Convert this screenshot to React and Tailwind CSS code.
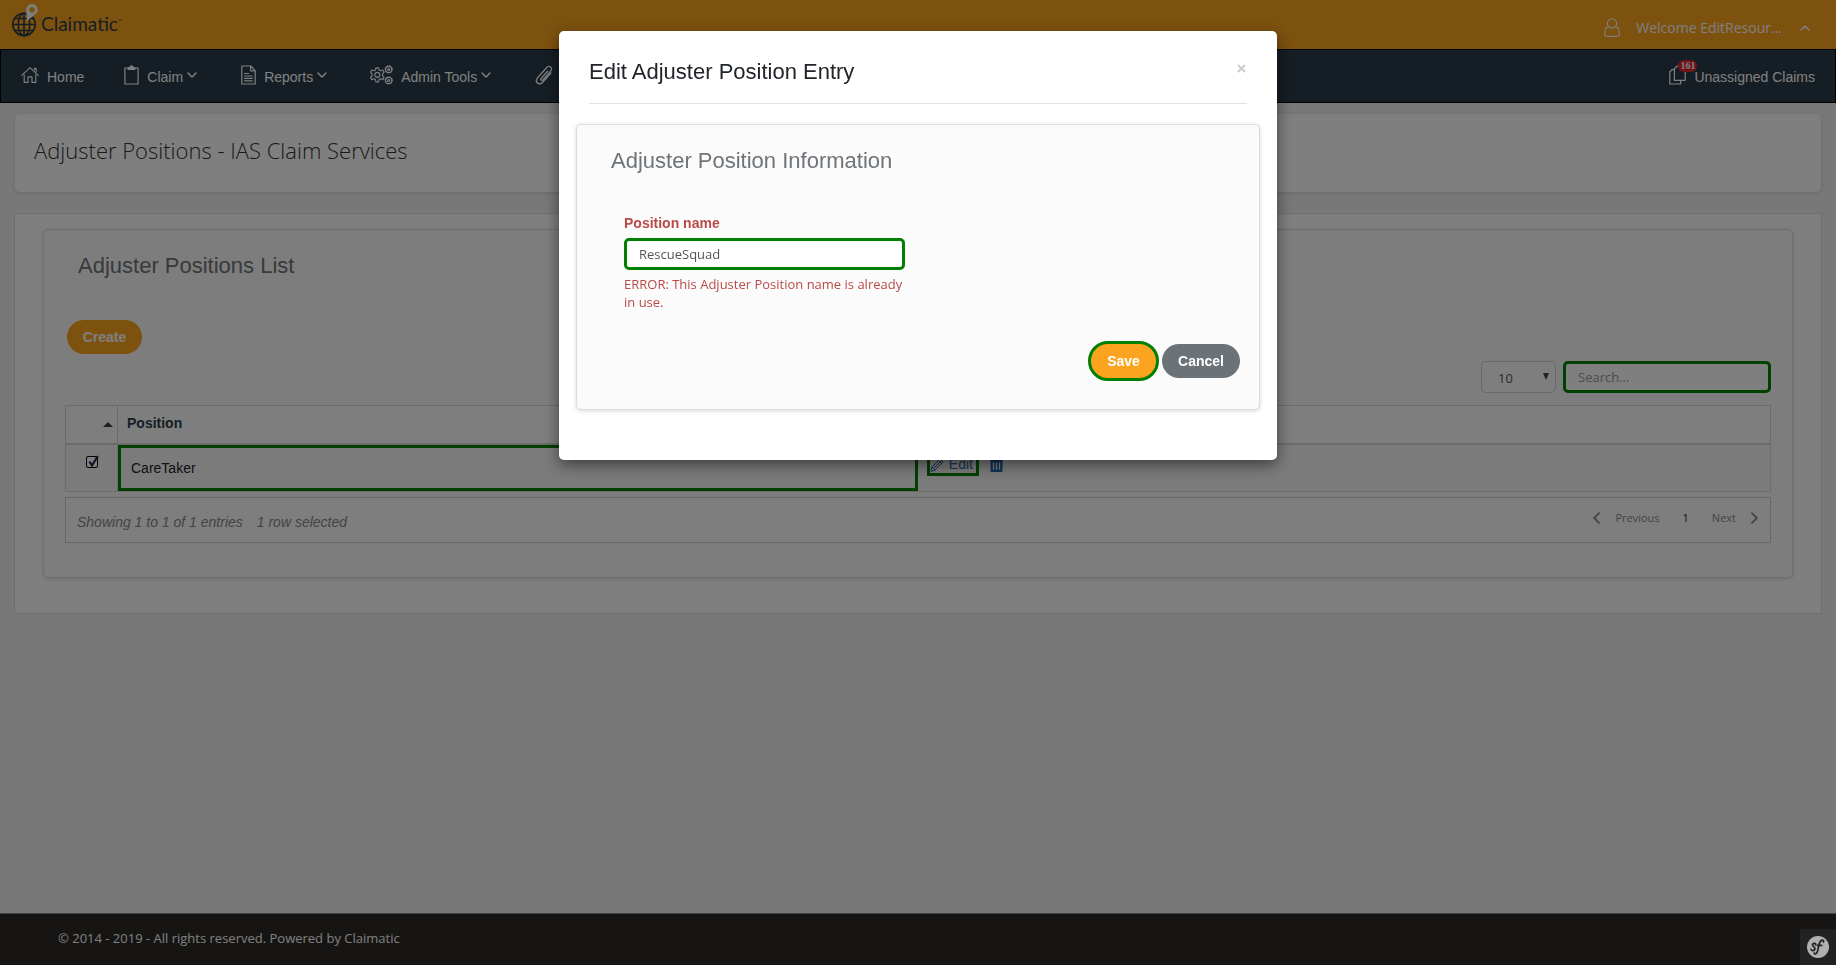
import React from "react";

const stroke = {
  fill: "none",
  stroke: "currentColor",
  strokeLinecap: "round",
  strokeLinejoin: "round",
};

function HomeIcon() {
  return (
    <svg className="h-[18px] w-[18px]" viewBox="0 0 19 18" {...stroke} strokeWidth="1.2" aria-hidden="true">
      <path d="M.8 9.4 9.5 1.2l8.7 8.2M14.2 3.4V2H16v3.4M3.4 8.8v8h4V11h4.200v5.800h4v-8" />
    </svg>
  );
}

function ClipboardIcon() {
  return (
    <svg className="h-[20px] w-[15px]" viewBox="0 0 15 20" {...stroke} strokeWidth="1.2" aria-hidden="true">
      <path d="M4 3H.9v16h13.2V3H11" />
      <path d="M4.200 4.400V2.600h1.600L6.600 1h1.800l.8 1.600h1.600v1.800z" fill="currentColor" />
    </svg>
  );
}

function ReportIcon() {
  return (
    <svg className="h-[20px] w-[15px]" viewBox="0 0 15 20" {...stroke} strokeWidth="1.2" aria-hidden="true">
      <path d="M.8 1h9l4.400 4.600V19H.8zM9.600 1v4.800h4.600M3.600 8.500h4M3.600 11h7.600M3.600 13.400h7.600M3.600 15.800h7.600" />
    </svg>
  );
}

function GearsIcon() {
  return (
    <svg className="h-[20px] w-[24px]" viewBox="0 0 24 20" {...stroke} strokeWidth="1.2" aria-hidden="true">
      <path d="M7 2.800h2.600l.5 2.200 1.500.8 2.200-.8 1.300 2.200-1.600 1.700v1.800l1.600 1.700-1.300 2.200-2.200-.8-1.500.8-.5 2.200H7l-.6-2.200-1.400-.8-2.200.8-1.300-2.200 1.600-1.700V8.900L1.500 7.200 2.800 5l2.200.8L6.400 5z" />
      <circle cx="8.300" cy="9.800" r="2.500" />
      <circle cx="19.700" cy="4.400" r="3.100" />
      <circle cx="19.700" cy="4.400" r="3.700" strokeWidth="1" strokeLinecap="butt" strokeDasharray="1.500 1.400" />
      <circle cx="19.700" cy="4.400" r=".9" />
      <circle cx="19.700" cy="15.400" r="3.100" />
      <circle cx="19.700" cy="15.400" r="3.700" strokeWidth="1" strokeLinecap="butt" strokeDasharray="1.500 1.400" />
      <circle cx="19.700" cy="15.400" r=".9" />
    </svg>
  );
}

function ClipIcon() {
  return (
    <svg className="h-[20px] w-[18px]" viewBox="0 0 18 20" {...stroke} strokeWidth="1.300" aria-hidden="true">
      <path d="M12.600 6.200 6.200 13.400c-.9 1.200.6 2.600 1.700 1.500l7.600-8.600c2.800-3.300-1.200-6.800-4-3.600L2.700 12.600c-3.600 4.200 1.400 8.600 5 4.600l8.200-9.200" />
    </svg>
  );
}

function CopyIcon() {
  return (
    <svg className="h-[20px] w-[17px]" viewBox="0 0 17 20" {...stroke} strokeWidth="1.200" aria-hidden="true">
      <path d="M8.200 1h8v14.400H5.400V3.800zM5.400 4.600H3L.8 7v12h10.800v-3.400" />
    </svg>
  );
}

function UserIcon() {
  return (
    <svg className="h-[19px] w-[16px]" viewBox="0 0 16 19" {...stroke} strokeWidth="1.100" aria-hidden="true">
      <circle cx="8" cy="5.400" r="4.700" />
      <path d="M4.200 8.800C1.800 9.500.7 11.500.7 14v2.500c0 1.300.7 1.900 1.900 1.900h10.800c1.200 0 1.900-.6 1.900-1.900V14c0-2.500-1.100-4.500-3.500-5.200" />
    </svg>
  );
}

function Chevron({ d, className }) {
  return (
    <svg className={className} viewBox="0 0 10 10" {...stroke} strokeWidth="1.500" aria-hidden="true">
      <path d={d} />
    </svg>
  );
}

const DOWN = "M1 3l4 4 4-4";
const UP = "M1 7l4-4 4 4";
const LEFT = "M7.500 1 3.500 5l4 4";
const RIGHT = "M2.500 1l4 4-4 4";

function Logo() {
  return (
    <a href="#home" className="flex items-end gap-[3px]">
      <svg className="h-[33px] w-[26px]" viewBox="0 0 26 33" aria-hidden="true">
        <g fill="none" stroke="#2c3c4a" strokeWidth="1.600">
          <circle cx="12" cy="20.500" r="11.200" />
          <ellipse cx="12" cy="20.500" rx="5.800" ry="11.200" />
          <path d="M12 9.500v22M1 20.500h22M2.800 14.500h18.400M2.800 26.500h18.400" />
        </g>
        <path
          d="M20 0a5.800 5.800 0 0 1 5.800 5.800c0 4-5.600 6.200-11.300 12.200.8-4-.3-8-.3-12.200A5.800 5.800 0 0 1 20 0zm0 2.900a2.800 2.800 0 1 0 0 5.600 2.800 2.800 0 0 0 0-5.600z"
          fill="#fff"
          fillRule="evenodd"
        />
      </svg>
      <span className="flex pb-[2px] font-[Lato,sans-serif] text-[19px] leading-[22px] text-[#2c3c4a]">
        Claimatic<span className="text-[5px] leading-[16px]">™</span>
      </span>
    </a>
  );
}

function NavItem({ icon, label, menu, className = "" }) {
  return (
    <a href="#menu" className={`flex items-center gap-[8px] ${className}`}>
      {icon}
      <span className="flex items-center gap-1 pt-[4px]">
        {label}
        {menu && <Chevron d={DOWN} className="mb-1 h-[10px] w-[10px]" />}
      </span>
    </a>
  );
}

function Panel({ className = "", children }) {
  return (
    <div className={`rounded-[5px] border border-[#dcdcdc] bg-[#fbfbfb] shadow-[0_1px_4px_rgba(0,0,0,0.15)] ${className}`}>
      {children}
    </div>
  );
}

function Page() {
  return (
    <div className="flex min-h-screen flex-col bg-[#f0f0f0]">
      <header className="flex h-[49px] items-start justify-between bg-[#faa41f] pl-3 pr-[26px] pt-1">
        <Logo />
        <button type="button" className="mt-[13px] flex items-center gap-4 text-[14px] leading-[20px] text-white">
          <UserIcon />
          <span className="pt-px">Welcome EditResour...</span>
          <Chevron d={UP} className="ml-[2px] h-[10px] w-[10px]" />
        </button>
      </header>

      <nav className="flex h-[54px] items-center justify-between border border-black bg-[#2c3c4a] px-5 font-[Liberation_Sans,sans-serif] text-[14px] text-white">
        <div className="flex items-center gap-11 pb-[2px]">
          <NavItem icon={<HomeIcon />} label="Home" className="-mr-1" />
          <NavItem icon={<ClipboardIcon />} label="Claim" menu />
          <NavItem icon={<ReportIcon />} label="Reports" menu />
          <NavItem icon={<GearsIcon />} label="Admin Tools" menu className="-ml-[2px]" />
          <a href="#attachments" aria-label="Attachments">
            <ClipIcon />
          </a>
        </div>
        <a href="#unassigned" className="relative flex items-center gap-[8px] pb-[2px]">
          <CopyIcon />
          <span className="pt-[4px]">Unassigned Claims</span>
          <span className="absolute -top-[3px] left-[9px] rounded-full bg-[#e02430] px-[2px] font-[Liberation_Serif,serif] text-[10px] font-bold leading-[12px]">
            161
          </span>
        </a>
      </nav>

      <main className="px-[14px] pt-[11px]">
        <div className="mx-px flex h-[78px] items-center rounded-[5px] bg-white px-[19px] shadow-[0_1px_4px_rgba(0,0,0,0.12)]">
          <h1 className="pb-[6px] text-[22px] font-light leading-[30px] text-[#333]">Adjuster Positions - IAS Claim Services</h1>
        </div>

        <section className="mt-[21px] border border-[#dedede] bg-white px-[28px] pb-[35px] pt-[15px]">
          <Panel className="px-[21px] pb-[34px] pt-[22px]">
            <h2 className="ml-[13px] font-[Liberation_Sans,sans-serif] text-[22px] leading-[28px] text-[#6f7478]">
              Adjuster Positions List
            </h2>
            <button
              type="button"
              className="ml-[2px] mt-[40px] block h-[34px] w-[75px] rounded-full bg-[#faa41f] font-[Liberation_Sans,sans-serif] text-[14px] font-bold text-white"
            >
              Create
            </button>

            <div className="mt-[7px] flex justify-end gap-[7px]">
              <div className="relative">
                <select
                  aria-label="Entries per page"
                  className="h-[32px] w-[75px] appearance-none rounded-[5px] border border-[#d0d0d0] bg-[#fdfdfd] px-4 pt-[3px] text-[13px] text-[#555]"
                  defaultValue="10"
                >
                  <option>10</option>
                  <option>25</option>
                </select>
                <svg className="pointer-events-none absolute right-[7px] top-[12px] h-[7px] w-[6px]" viewBox="0 0 6 7" aria-hidden="true">
                  <path d="M0 0h6L3 7z" fill="#444" />
                </svg>
              </div>
              <input
                type="search"
                aria-label="Search"
                placeholder="Search..."
                className="h-[32px] w-[208px] rounded-[5px] border-[3px] border-[#008000] bg-white px-3 text-[13px] placeholder:text-[#999]"
              />
            </div>

            <table className="mt-3 w-full table-fixed border-collapse font-[Liberation_Sans,sans-serif] text-[14px]">
              <colgroup>
                <col className="w-[52px]" />
                <col className="w-[47%]" />
                <col />
              </colgroup>
              <thead>
                <tr className="h-[38px] border border-b-2 border-[#d8d8d8] bg-[#fdfdfd] text-left text-[#2c3c4a]">
                  <th className="border-r border-[#d8d8d8] pr-[4px]">
                    <svg className="ml-auto h-[5px] w-[10px]" viewBox="0 0 10 5" aria-label="Sorted ascending">
                      <path d="M5 0l5 5H0z" fill="#444" />
                    </svg>
                  </th>
                  <th className="pb-[2px] pl-[9px]">Position</th>
                  <th aria-label="Actions" />
                </tr>
              </thead>
              <tbody>
                <tr className="border border-[#dadada] bg-[#f7f7f7] text-[#222]">
                  <td className="border-r border-[#dadada] p-0 align-top">
                    <label className="relative mx-auto mt-[11px] block h-[13px] w-[12px]">
                      <input
                        type="checkbox"
                        defaultChecked
                        aria-label="Select CareTaker"
                        className="block h-[12px] w-[12px] appearance-none rounded-[2px] border border-black bg-white"
                      />
                      <svg className="absolute -right-px -top-px h-[13px] w-[12px]" viewBox="0 0 12 13" aria-hidden="true">
                        <path d="M2.500 6.500l2.500 4L10.800 1" fill="none" stroke="#1c2a48" strokeWidth="2.200" />
                      </svg>
                    </label>
                  </td>
                  <td className="p-0">
                    <div className="mr-px flex h-[46px] items-center border-[3px] border-[#008000] px-[10px] pt-px">CareTaker</div>
                  </td>
                  <td className="p-0 align-top">
                    <div className="flex items-end gap-[11px] pl-[8px] pt-[9px] text-[#2a6cb0]">
                      <a href="#edit" className="flex h-[22px] w-[52px] items-center gap-[5px] border-[3px] border-[#008000]">
                        <svg className="h-[14px] w-[14px]" viewBox="0 0 14 14" {...stroke} strokeWidth="1" aria-hidden="true">
                          <path d="M1 13l1-4L10 1l3 3-8 8zM2 9l3 3M8.500 2.500l3 3M3.500 10.500l7-7" />
                        </svg>
                        Edit
                      </a>
                      <button type="button" aria-label="Delete" className="mb-1">
                        <svg className="h-[14px] w-[13px]" viewBox="0 0 13 14" aria-hidden="true">
                          <path d="M0 1.500h13V3H0zM4 0h5v2H4zM.500 2.500h12V13a1 1 0 0 1-1 1h-10a1 1 0 0 1-1-1z" fill="#1f68b0" />
                          <path d="M3.500 4.500v7M6.500 4.500v7M9.500 4.500v7" stroke="#fff" strokeWidth="1.300" />
                        </svg>
                      </button>
                    </div>
                  </td>
                </tr>
              </tbody>
            </table>

            <div className="mt-[5px] flex h-[46px] items-center justify-between border border-[#d0d0d0] bg-[#fcfcfc] pl-[11px] pr-[12px]">
              <p className="flex gap-[14px] pt-[5px] font-[Liberation_Sans,sans-serif] text-[14px] italic text-[#888]">
                <span>Showing 1 to 1 of 1 entries</span>
                <span>1 row selected</span>
              </p>
              <div className="flex items-center pb-[3px] text-[11px] text-[#888]">
                <button type="button" className="flex items-center gap-[13px]">
                  <Chevron d={LEFT} className="h-[12px] w-[12px]" />
                  Previous
                </button>
                <button type="button" className="ml-[23px] text-[#222]">1</button>
                <button type="button" className="ml-[23px] flex items-center gap-[13px]">
                  Next
                  <Chevron d={RIGHT} className="-mr-[3px] h-[12px] w-[12px]" />
                </button>
              </div>
            </div>
          </Panel>
        </section>
      </main>

      <footer className="mt-auto h-[52px] border-t border-[#888] bg-[#2c2a26] px-[58px] pt-[14px] text-[13px] leading-[20px] text-[#fdfdfd]">
        © 2014 - 2019 - All rights reserved. Powered by Claimatic
      </footer>
    </div>
  );
}

function EditDialog() {
  return (
    <div className="fixed inset-0 flex items-start justify-center bg-black/50 pt-[31px]">
      <div
        role="dialog"
        aria-modal="true"
        aria-labelledby="dialog-title"
        className="w-[718px] rounded-[5px] bg-white px-[17px] pb-[50px] shadow-[0_5px_15px_rgba(0,0,0,0.5)]"
      >
        <div className="mx-[13px] flex h-[73px] items-start justify-between border-b border-[#e2e2e2] pt-[27px]">
          <h2 id="dialog-title" className="font-[Liberation_Sans,sans-serif] text-[22px] leading-[28px] text-[#212529]">
            Edit Adjuster Position Entry
          </h2>
          <button type="button" aria-label="Close" className="mr-px mt-[6px]">
            <svg className="h-[9px] w-[9px]" viewBox="0 0 9 9" aria-hidden="true">
              <path d="M1 1l7 7M8 1L1 8" stroke="#ccc" strokeWidth="2" />
            </svg>
          </button>
        </div>
        <Panel className="mt-5 px-[19px] pb-[28px] pt-[22px]">
          <h3 className="ml-[15px] font-[Liberation_Sans,sans-serif] text-[22px] leading-[28px] text-[#6f7478]">
            Adjuster Position Information
          </h3>
          <form className="mt-[38px]">
            <div className="ml-7 w-[281px]">
              <label htmlFor="position-name" className="block font-[Liberation_Sans,sans-serif] text-[14px] font-bold leading-[20px] text-[#b94a48]">
                Position name
              </label>
              <input
                id="position-name"
                type="text"
                defaultValue="RescueSquad"
                className="mt-[5px] block h-[32px] w-full rounded-[5px] border-[3px] border-[#008000] bg-white px-3 text-[13px] text-[#555]"
              />
              <p className="mt-[5px] text-[13px] leading-[18px] text-[#b94a48]">
                ERROR: This Adjuster Position name is already in use.
              </p>
            </div>
            <div className="mt-[30px] flex items-center justify-end gap-[3px] font-[Liberation_Sans,sans-serif] text-[14px] font-bold text-white">
              <button type="submit" className="h-[40px] w-[71px] rounded-full border-[3px] border-[#008000] bg-[#fca31f]">
                Save
              </button>
              <button type="button" className="h-[34px] w-[78px] rounded-full bg-[#6c7378]">
                Cancel
              </button>
            </div>
          </form>
        </Panel>
      </div>
    </div>
  );
}

export default function App() {
  return (
    <div className="font-[Open_Sans,sans-serif]">
      <Page />
      <EditDialog />
      <button
        type="button"
        aria-label="Symfony toolbar"
        className="fixed bottom-0 right-0 flex h-[36px] w-[36px] items-center justify-center rounded-tl-[3px] bg-[#222]"
      >
        <svg className="h-[22px] w-[22px]" viewBox="0 0 22 22" aria-hidden="true">
          <circle cx="11" cy="11" r="11" fill="#b0b0b0" />
          <g fill="none" stroke="#222" strokeWidth="1.700" strokeLinecap="round">
            <path d="M8.800 8.800C9 7.300 6.800 6.800 5.800 8c-1.500 2 2.600 3 2.200 5-.4 2-3.600 2-4 .4" />
            <path d="M16.500 6c.6-1.400-.6-2.200-2-1.600-2.200 1-2.600 4.600-3.300 8-.5 2.800-1 5.300-2.700 5.600-.9.100-1.400-.5-1.100-1.100M10.500 9.400h4.200" />
          </g>
        </svg>
      </button>
    </div>
  );
}
